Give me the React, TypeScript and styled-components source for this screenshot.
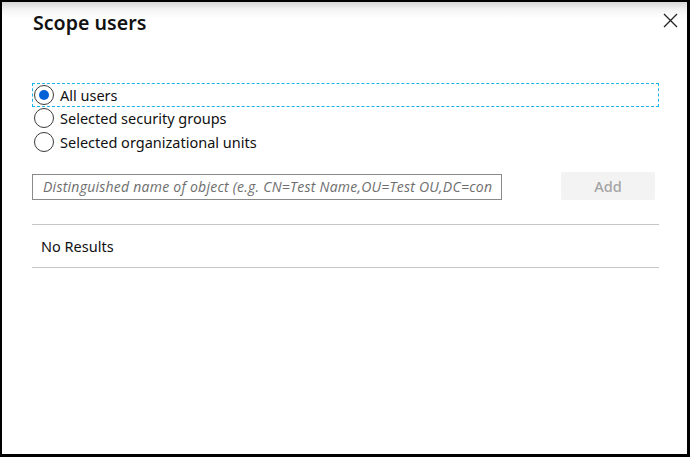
import React, { useState } from 'react';
import styled, { createGlobalStyle } from 'styled-components';

const GlobalStyle = createGlobalStyle`
  body {
    margin: 0;
    background: #ffffff;
    font-family: 'Noto Sans', 'Open Sans', sans-serif;
  }
  * {
    box-sizing: border-box;
  }
`;

const Frame = styled.div`
  width: 690px;
  height: 457px;
  border-style: solid;
  border-color: #000;
  border-width: 2px 3px 3px 2px;
  background: linear-gradient(to bottom, #d6d6d6 0px, #f4f4f4 8px, #ffffff 16px);
  display: flex;
  flex-direction: column;
`;

const Header = styled.div`
  display: flex;
  justify-content: space-between;
  align-items: flex-start;
  padding: 8px 9px 0 31px;
`;

const Title = styled.h1`
  margin: 0;
  font-size: 19.6px;
  line-height: 26px;
  font-weight: 600;
  color: #111;
`;

const CloseButton = styled.button`
  border: none;
  background: none;
  padding: 0;
  margin-top: 2px;
  width: 16px;
  height: 16px;
  display: flex;
  align-items: center;
  justify-content: center;
  cursor: pointer;
`;

const Body = styled.div`
  padding: 0 28px 0 30px;
  display: flex;
  flex-direction: column;
`;

const RadioGroup = styled.div`
  margin-top: 47px;
  display: flex;
  flex-direction: column;
`;

const Option = styled.label<{ $focused?: boolean }>`
  display: flex;
  align-items: center;
  height: 23.5px;
  padding-left: 2px;
  gap: 6px;
  font-size: 14.5px;
  color: #111;
  outline: ${(p) => (p.$focused ? '1px dashed #1ab3e8' : 'none')};
  outline-offset: -1px;
  cursor: pointer;
`;

const RadioCircle = styled.span<{ $checked?: boolean }>`
  width: 20px;
  height: 20px;
  border-radius: 50%;
  border: 1px solid #3a3a3a;
  display: flex;
  align-items: center;
  justify-content: center;
  flex-shrink: 0;

  &::after {
    content: '';
    width: 10px;
    height: 10px;
    border-radius: 50%;
    background: ${(p) => (p.$checked ? '#0062d6' : 'transparent')};
  }
`;

const InputRow = styled.div`
  margin-top: 18px;
  display: flex;
  align-items: flex-end;
  padding-right: 4px;
`;

const DnInput = styled.input`
  width: 470px;
  height: 26px;
  border: 1px solid #8a8a8a;
  padding: 0 8px 0 10px;
  font-family: 'Open Sans', 'Noto Sans', sans-serif;
  font-size: 14px;
  letter-spacing: 0.25px;
  font-style: italic;
  color: #333;
  background: #fff;

  &::placeholder {
    color: #6e6e6e;
    font-style: italic;
  }
`;

const AddButton = styled.button`
  margin-left: auto;
  width: 94px;
  height: 28px;
  border: none;
  border-radius: 2px;
  background: #f3f3f3;
  color: #a3a3a3;
  font-family: 'Noto Sans', 'Open Sans', sans-serif;
  font-size: 14.5px;
  font-weight: 500;
`;

const Divider = styled.div`
  height: 1px;
  background: #c6c6c6;
`;

const Results = styled.div`
  margin-top: 24px;
  display: flex;
  flex-direction: column;
`;

const ResultRow = styled.div`
  height: 42px;
  display: flex;
  align-items: center;
  padding-left: 9px;
  font-size: 14.5px;
  color: #111;
`;

const options = [
  'All users',
  'Selected security groups',
  'Selected organizational units',
];

export default function App() {
  const [selected, setSelected] = useState(0);

  return (
    <>
      <GlobalStyle />
      <Frame>
        <Header>
          <Title>Scope users</Title>
          <CloseButton aria-label="Close">
            <svg width="15" height="15" viewBox="0 0 15 15">
              <path d="M1 1 L14 14 M14 1 L1 14" stroke="#222" strokeWidth="1.3" fill="none" />
            </svg>
          </CloseButton>
        </Header>
        <Body>
          <RadioGroup>
            {options.map((label, i) => (
              <Option key={label} $focused={i === 0} onClick={() => setSelected(i)}>
                <RadioCircle $checked={selected === i} />
                {label}
              </Option>
            ))}
          </RadioGroup>
          <InputRow>
            <DnInput placeholder="Distinguished name of object (e.g. CN=Test Name,OU=Test OU,DC=contoso,DC=com)" />
            <AddButton disabled>Add</AddButton>
          </InputRow>
          <Results>
            <Divider />
            <ResultRow>No Results</ResultRow>
            <Divider />
          </Results>
        </Body>
      </Frame>
    </>
  );
}
